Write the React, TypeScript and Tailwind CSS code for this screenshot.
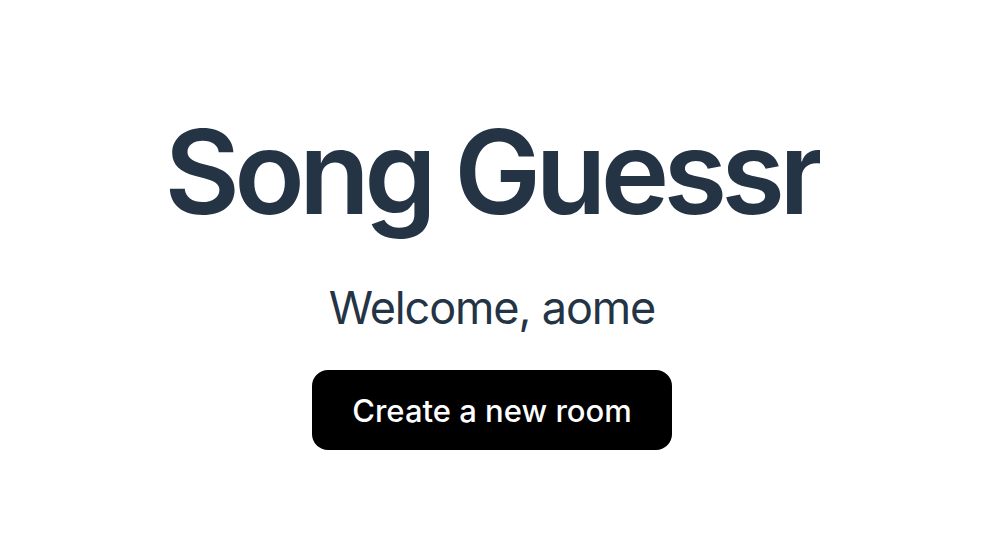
export default function App() {
  return (
    <main className="flex min-h-screen flex-col items-center justify-center bg-white pt-1 pr-0.5 font-['Inter',sans-serif] text-[#243445]">
      <h1 className="overflow-hidden text-[116px] leading-[140px] font-semibold tracking-tighter whitespace-nowrap">Song Guessr</h1>
      <p className="mt-[38px] text-[45px] leading-[56px] tracking-tight">Welcome, aome</p>
      <button type="button" className="mt-[34px] h-20 rounded-2xl bg-black px-10 pt-0.5 text-[31px] leading-10 font-medium text-white">
        Create a new room
      </button>
    </main>
  );
}
